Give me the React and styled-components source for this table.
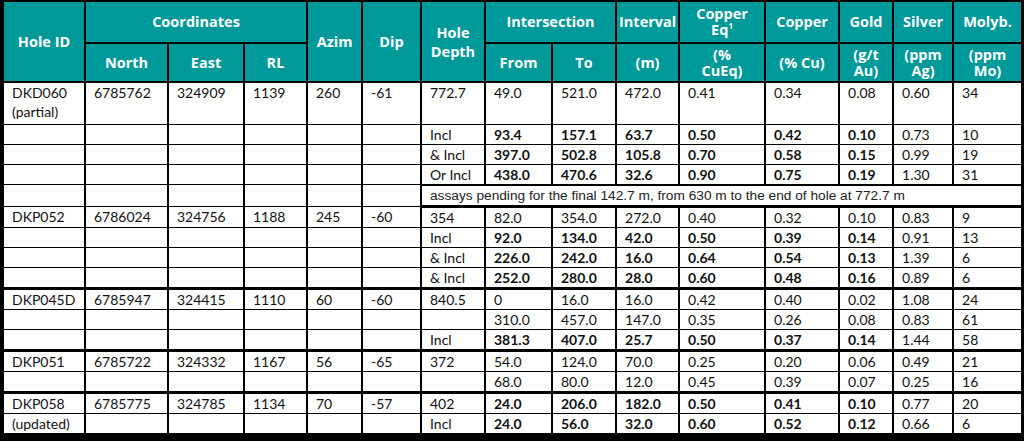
import styled, { createGlobalStyle } from 'styled-components';

const GlobalStyle = createGlobalStyle`
  html, body {
    margin: 0;
    padding: 0;
    background: #000;
  }
`;

const Frame = styled.div`
  width: 1024px;
  height: 441px;
  overflow: hidden;
  background: #000;
`;

const Table = styled.table`
  width: 1021px;
  margin-left: 2px;
  table-layout: fixed;
  border-collapse: collapse;
  background: #fff;
  color: #111;
  font-family: Lato, 'Liberation Sans', sans-serif;
  font-size: 14px;
`;

const Col = styled.col`
  width: ${(p) => p.$w}px;
`;

const HeadRow = styled.tr`
  height: ${(p) => p.$h}px;
`;

const HeadCell = styled.th`
  background: #00999a;
  color: #fff;
  font-family: 'Open Sans', 'Liberation Sans', sans-serif;
  font-weight: 700;
  font-size: 14.5px;
  line-height: ${(p) => p.$lh || 16}px;
  text-align: center;
  vertical-align: middle;
  border: 2px solid #000;
  padding: 0 2px;

  sup {
    font-size: 8px;
    line-height: 0;
    vertical-align: 6px;
  }
`;

const Row = styled.tr`
  height: ${(p) => (p.$tall ? 42 : 20)}px;
`;

const Cell = styled.td`
  padding: 0 8px;
  line-height: 19px;
  vertical-align: top;
  white-space: nowrap;
  font-weight: ${(p) => (p.$bold ? 700 : 400)};
  border-left: 2px solid #000;
  border-right: 2px solid #000;
  border-top: ${(p) => (p.$top ? 3 : 1)}px solid #000;
  border-bottom: 1px solid #000;
`;

const NoteCell = styled(Cell)`
  font-family: 'Liberation Sans', Arial, sans-serif;
  font-size: 13.7px;
  color: #222;
  border-top: 2px solid #000;
  border-bottom: 3px solid #000;
  vertical-align: middle;
`;

const LastRow = styled(Row)`
  td {
    border-bottom: 4px solid #000;
  }
`;

const widths = [82, 83, 76, 63, 55, 59, 64, 67, 64, 63, 86, 74, 54, 60, 69];

// rows: [depth, from, to, interval, cuEq, cu, au, ag, mo, bold]
const holes = [
  {
    id: ['DKD060', '(partial)'],
    info: ['6785762', '324909', '1139', '260', '-61'],
    rows: [
      ['772.7', '49.0', '521.0', '472.0', '0.41', '0.34', '0.08', '0.60', '34', false],
      ['Incl', '93.4', '157.1', '63.7', '0.50', '0.42', '0.10', '0.73', '10', true],
      ['& Incl', '397.0', '502.8', '105.8', '0.70', '0.58', '0.15', '0.99', '19', true],
      ['Or Incl', '438.0', '470.6', '32.6', '0.90', '0.75', '0.19', '1.30', '31', true],
    ],
    note: 'assays pending for the final 142.7 m, from 630 m to the end of hole at 772.7 m',
  },
  {
    id: ['DKP052'],
    info: ['6786024', '324756', '1188', '245', '-60'],
    rows: [
      ['354', '82.0', '354.0', '272.0', '0.40', '0.32', '0.10', '0.83', '9', false],
      ['Incl', '92.0', '134.0', '42.0', '0.50', '0.39', '0.14', '0.91', '13', true],
      ['& Incl', '226.0', '242.0', '16.0', '0.64', '0.54', '0.13', '1.39', '6', true],
      ['& Incl', '252.0', '280.0', '28.0', '0.60', '0.48', '0.16', '0.89', '6', true],
    ],
  },
  {
    id: ['DKP045D'],
    info: ['6785947', '324415', '1110', '60', '-60'],
    rows: [
      ['840.5', '0', '16.0', '16.0', '0.42', '0.40', '0.02', '1.08', '24', false],
      ['', '310.0', '457.0', '147.0', '0.35', '0.26', '0.08', '0.83', '61', false],
      ['Incl', '381.3', '407.0', '25.7', '0.50', '0.37', '0.14', '1.44', '58', true],
    ],
  },
  {
    id: ['DKP051'],
    info: ['6785722', '324332', '1167', '56', '-65'],
    rows: [
      ['372', '54.0', '124.0', '70.0', '0.25', '0.20', '0.06', '0.49', '21', false],
      ['', '68.0', '80.0', '12.0', '0.45', '0.39', '0.07', '0.25', '16', false],
    ],
  },
  {
    id: ['DKP058', '(updated)'],
    info: ['6785775', '324785', '1134', '70', '-57'],
    rows: [
      ['402', '24.0', '206.0', '182.0', '0.50', '0.41', '0.10', '0.77', '20', true],
      ['Incl', '24.0', '56.0', '32.0', '0.60', '0.52', '0.12', '0.66', '6', true],
    ],
    split: true,
  },
];

function HoleRows({ hole, groupIndex, last }) {
  const out = [];
  hole.rows.forEach((r, i) => {
    const top = i === 0 && groupIndex > 0 && !holes[groupIndex - 1].note;
    const first = i === 0;
    const isLast = last && i === hole.rows.length - 1;
    const RowTag = isLast ? LastRow : Row;
    const tall = first && hole.id.length > 1 && !hole.split;
    const bold = r[9];

    let idCell = '';
    if (first) idCell = hole.split ? hole.id[0] : hole.id.map((t, k) => <div key={k}>{t}</div>);
    if (hole.split && i === 1) idCell = hole.id[1];

    out.push(
      <RowTag key={i} $tall={tall}>
        <Cell $top={top}>{idCell}</Cell>
        {hole.info.map((v, k) => (
          <Cell key={k} $top={top}>{first ? v : ''}</Cell>
        ))}
        <Cell $top={top}>{r[0]}</Cell>
        {r.slice(1, 7).map((v, k) => (
          <Cell key={k} $top={top} $bold={bold}>{v}</Cell>
        ))}
        <Cell $top={top}>{r[7]}</Cell>
        <Cell $top={top}>{r[8]}</Cell>
      </RowTag>
    );
  });
  if (hole.note) {
    out.push(
      <Row key="note">
        {[0, 1, 2, 3, 4, 5].map((k) => (
          <Cell key={k} />
        ))}
        <NoteCell colSpan={9}>{hole.note}</NoteCell>
      </Row>
    );
  }
  return out;
}

export default function App() {
  return (
    <Frame>
      <GlobalStyle />
      <Table>
        <colgroup>
          {widths.map((w, i) => (
            <Col key={i} $w={w} />
          ))}
        </colgroup>
        <thead>
          <HeadRow $h={42}>
            <HeadCell rowSpan={2}>Hole ID</HeadCell>
            <HeadCell colSpan={3}>Coordinates</HeadCell>
            <HeadCell rowSpan={2}>Azim</HeadCell>
            <HeadCell rowSpan={2}>Dip</HeadCell>
            <HeadCell rowSpan={2} $lh={19}>
              Hole
              <br />
              Depth
            </HeadCell>
            <HeadCell colSpan={2}>Intersection</HeadCell>
            <HeadCell>Interval</HeadCell>
            <HeadCell>
              Copper
              <br />
              Eq<sup>1</sup>
            </HeadCell>
            <HeadCell>Copper</HeadCell>
            <HeadCell>Gold</HeadCell>
            <HeadCell>Silver</HeadCell>
            <HeadCell>Molyb.</HeadCell>
          </HeadRow>
          <HeadRow $h={39}>
            <HeadCell>North</HeadCell>
            <HeadCell>East</HeadCell>
            <HeadCell>RL</HeadCell>
            <HeadCell>From</HeadCell>
            <HeadCell>To</HeadCell>
            <HeadCell>(m)</HeadCell>
            <HeadCell>
              (%
              <br />
              CuEq)
            </HeadCell>
            <HeadCell>(% Cu)</HeadCell>
            <HeadCell>
              (g/t
              <br />
              Au)
            </HeadCell>
            <HeadCell>
              (ppm
              <br />
              Ag)
            </HeadCell>
            <HeadCell>
              (ppm
              <br />
              Mo)
            </HeadCell>
          </HeadRow>
        </thead>
        <tbody>
          {holes.map((h, i) => (
            <HoleRows key={h.id[0]} hole={h} groupIndex={i} last={i === holes.length - 1} />
          ))}
        </tbody>
      </Table>
    </Frame>
  );
}
